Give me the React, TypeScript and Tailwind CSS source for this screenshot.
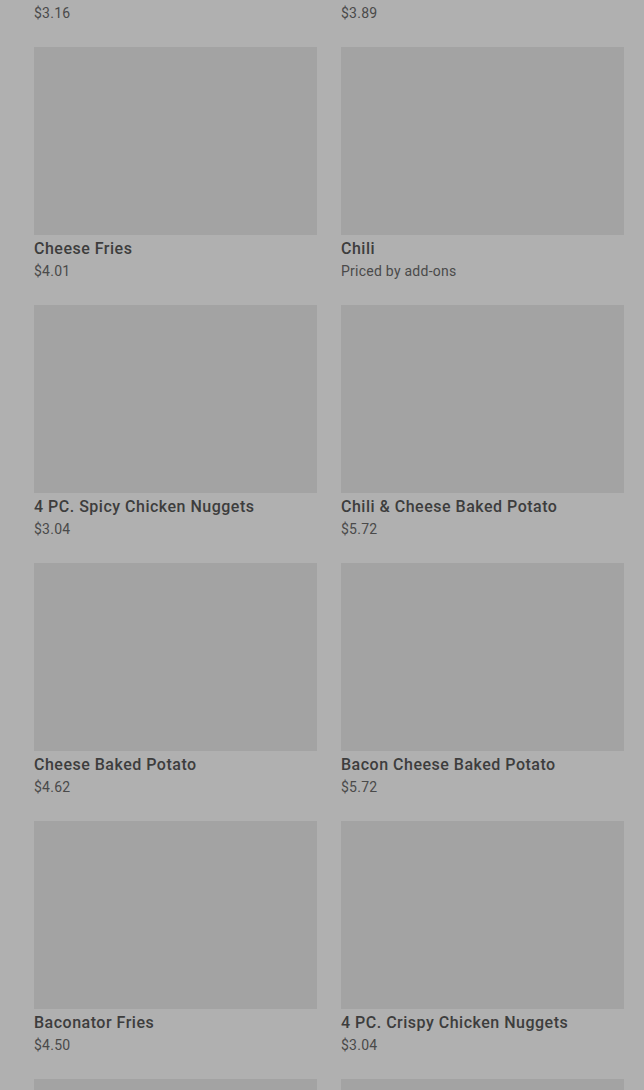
import React from 'react';

type Item = { name: string; price: string };

const items: Item[] = [
  { name: 'Small Chocolate Frosty', price: '$3.16' },
  { name: 'Crispy Chicken Nuggets Jr.', price: '$3.89' },
  { name: 'Cheese Fries', price: '$4.01' },
  { name: 'Chili', price: 'Priced by add-ons' },
  { name: '4 PC. Spicy Chicken Nuggets', price: '$3.04' },
  { name: 'Chili & Cheese Baked Potato', price: '$5.72' },
  { name: 'Cheese Baked Potato', price: '$4.62' },
  { name: 'Bacon Cheese Baked Potato', price: '$5.72' },
  { name: 'Baconator Fries', price: '$4.50' },
  { name: '4 PC. Crispy Chicken Nuggets', price: '$3.04' },
  { name: 'Plain Baked Potato', price: '$2.89' },
  { name: 'Sour Cream & Chive Baked Potato', price: '$3.49' },
];

export default function App() {
  return (
    <div className="h-[1090px] overflow-hidden bg-[#b0b0b0] font-['Roboto',sans-serif]">
      <div className="-mt-[211px] grid grid-cols-2 gap-x-6 gap-y-[25px] pl-[34px] pr-[20px]">
        {items.map((item, i) => (
          <div key={i} className="flex flex-col">
            <div className="h-[188px] w-full bg-[#a3a3a3]" />
            <p className="mt-1 text-base leading-5 font-medium tracking-[0.5px] text-[#3d3d3d]">{item.name}</p>
            <p className="mt-[3px] text-sm leading-[18px] tracking-[0.25px] text-[#4a4a4a]">{item.price}</p>
          </div>
        ))}
      </div>
    </div>
  );
}
